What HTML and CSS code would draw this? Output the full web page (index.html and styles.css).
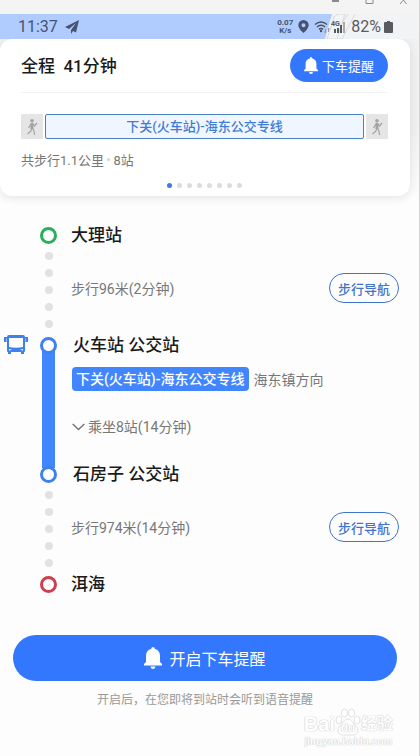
FILE: index.html
```html
<!DOCTYPE html>
<html lang="zh-CN">
<head>
  <meta charset="UTF-8" />
  <meta name="viewport" content="width=device-width, initial-scale=1.0"/>
  <title>公交路线</title>
  <link rel="stylesheet" href="styles.css">
</head>
<body>

  <!-- Window bar -->
  <div class="window-bar">
    <svg width="78" height="14" viewBox="0 0 78 14" fill="none" stroke="#8a8a8a">
      <path d="M1 1h7" stroke-width="2"/>
      <path d="M35 0v3.500h7V0"/>
      <path d="M69 4l3.500-4M75.500 4L72-.5"/>
    </svg>
  </div>

  <!-- Phone status bar -->
  <div class="status-bar">
    <svg class="status-shape" width="98" height="25" viewBox="0 0 98 25">
      <path d="M11 0H98V25H4L11 0z" fill="#f2f3f4"/>
      <path d="M13 3l4-3h7l-8 25H6zM27 0l-6 9 3 2M34 0L21 25h-5" fill="none" stroke="#d8dadc"/>
    </svg>
    <span class="clock">11:37</span>
    <svg width="14" height="14" viewBox="0 0 14 14" fill="#46536f">
      <path d="M14 0L0 7l4 2 7-6-5 7v4l2-3 3 1.500z"/>
    </svg>
    <div class="status-right">
      <span class="speed">0.07<br>K/s</span>
      <svg width="11" height="13" viewBox="0 0 11 13" fill="#46536f">
        <path fill-rule="evenodd" d="M5.500 0A5.200 5.200 0 0 0 .3 5.200C.3 8.500 5.500 13 5.500 13s5.200-4.500 5.200-7.800A5.200 5.200 0 0 0 5.500 0zm0 3.200a2 2 0 1 1 0 4 2 2 0 0 1 0-4z"/>
      </svg>
      <svg width="32" height="16" viewBox="0 0 32 16">
        <g fill="none" stroke="#4c4f56" stroke-width="1.500">
          <path d="M1 5.500q6-5 12 0M3 8q4-3.400 8 0M5 10.300q2-1.600 4 0"/>
        </g>
        <circle cx="7" cy="12" r="1.200" fill="#4c4f56"/>
        <path d="M11.500 10v4l-1.500-1.500M14.500 13V9l1.500 1.500" fill="none" stroke="#999"/>
        <text x="17" y="7" class="net-label">4G</text>
        <path d="M21 14v-4M24 14V9M27 14V6" stroke="#55585e" stroke-width="2"/>
        <path d="M30 14V3" stroke="#a9abae" stroke-width="2"/>
      </svg>
      <span class="battery">82%</span>
      <svg width="9" height="14" viewBox="0 0 9 14" fill="#5a5b5f">
        <path d="M3 1h3v1h2q1 0 1 1v9q0 1-1 1H1q-1 0-1-1V3q0-1 1-1h2z"/>
      </svg>
    </div>
  </div>

  <main>
    <!-- Trip summary -->
    <section class="summary-card">
      <div class="summary-head">
        <h1>全程&nbsp; 41分钟</h1>
        <button class="remind-btn">
          <svg width="14" height="17" viewBox="0 0 18 22" fill="#fff">
            <path d="M9 0a1.800 1.800 0 0 1 1.700 1.800C14 2.600 16 5.200 16 8.500V15l2 2v1.500H0V17l2-2V8.500C2 5.200 4 2.600 7.300 1.800A1.800 1.800 0 0 1 9 0zM6.500 19.500h5a2.500 2.500 0 0 1-5 0z"/>
          </svg>
          下车提醒
        </button>
      </div>
      <div class="segments">
        <span class="walk-seg">
          <svg width="12" height="16" viewBox="0 0 12 16" fill="none" stroke="#a2a2a4" stroke-width="1.200">
            <circle cx="6" cy="1.800" r="1.800" fill="#a2a2a4" stroke="none"/>
            <path d="M6 4v6" stroke-width="3"/>
            <path d="M5 5L2.500 9M7 5l1.500 2L11 4M5.500 9.500L5 12l-3.500 3M6.500 9.500L8 12l.5 4"/>
          </svg>
        </span>
        <span class="bus-seg">下关(火车站)-海东公交专线</span>
        <span class="walk-seg">
          <svg width="12" height="16" viewBox="0 0 12 16" fill="none" stroke="#a2a2a4" stroke-width="1.200">
            <circle cx="6" cy="1.800" r="1.800" fill="#a2a2a4" stroke="none"/>
            <path d="M6 4v6" stroke-width="3"/>
            <path d="M5 5L2.500 9M7 5l1.500 2L11 4M5.500 9.500L5 12l-3.500 3M6.500 9.500L8 12l.5 4"/>
          </svg>
        </span>
      </div>
      <p class="summary-info">共步行1.1公里 <i></i> 8站</p>
      <div class="pager">
        <span class="active"></span><span></span><span></span><span></span><span></span><span></span><span></span><span></span>
      </div>
    </section>

    <!-- Route timeline -->
    <ol class="route">
      <li class="station">
        <span class="ring start"></span>
        <h2>大理站</h2>
      </li>
      <li class="walk">
        <span class="dots"><i></i><i></i><i></i><i></i><i></i></span>
        <p>步行96米(2分钟)</p>
        <button class="nav-btn">步行导航</button>
      </li>
      <li class="station stop">
        <svg width="24" height="20" viewBox="0 0 24 20" fill="#3f7fee">
          <path fill-rule="evenodd" d="M5 0h14q2 0 2 2v14q0 1-1 1v2h-3v-2H7v2H4v-2q-1 0-1-1V2q0-2 2-2zm0 3v9q7 1.500 14 0V3zM5 14v1.500q2 0 3-.8zm14 0v1.500q-2 0-3-.8z"/>
          <path d="M0 2h4v1.500H2.500V7H0zM24 2h-4v1.500h1.500V7H24z"/>
        </svg>
        <span class="ring"></span>
        <h2>火车站 公交站</h2>
      </li>
      <li class="ride">
        <span class="bar"></span>
        <div class="ride-info">
          <div class="line-row">
            <span class="line-name">下关(火车站)-海东公交专线</span>
            <span>海东镇方向</span>
          </div>
          <button class="stops-btn">
            <svg width="13" height="8" viewBox="0 0 13 8" fill="none" stroke="#777" stroke-width="1.500">
              <path d="M.7 1l5.800 5.500L12.300 1"/>
            </svg>
            乘坐8站(14分钟)
          </button>
        </div>
      </li>
      <li class="station stop">
        <span class="ring"></span>
        <h2>石房子 公交站</h2>
      </li>
      <li class="walk">
        <span class="dots"><i></i><i></i><i></i><i></i><i></i></span>
        <p>步行974米(14分钟)</p>
        <button class="nav-btn">步行导航</button>
      </li>
      <li class="station">
        <span class="ring end"></span>
        <h2>洱海</h2>
      </li>
    </ol>

    <!-- Bottom action -->
    <footer>
      <button class="open-btn">
        <svg width="18" height="22" viewBox="0 0 18 22" fill="#fff">
          <path d="M9 0a1.800 1.800 0 0 1 1.700 1.800C14 2.600 16 5.200 16 8.500V15l2 2v1.500H0V17l2-2V8.500C2 5.200 4 2.600 7.300 1.800A1.800 1.800 0 0 1 9 0zM6.500 19.500h5a2.500 2.500 0 0 1-5 0z"/>
        </svg>
        开启下车提醒
      </button>
      <p>开启后，在您即将到站时会听到语音提醒</p>
    </footer>
  </main>

  <div class="watermark">
    <div class="mark-logo">
      <span>Bai</span>
      <span class="paw">
        <svg width="26" height="28" viewBox="0 0 26 28" fill="#fff" stroke="#e2e2e2">
          <ellipse cx="4" cy="12" rx="3" ry="4"/>
          <ellipse cx="9.500" cy="5" rx="3" ry="4"/>
          <ellipse cx="16.500" cy="5" rx="3" ry="4"/>
          <ellipse cx="22" cy="12" rx="3" ry="4"/>
          <path d="M13 11c-4 0-5 5-8 7s-3 9 3 9h10c6 0 6-7 3-9s-4-7-8-7z"/>
        </svg>
        <b>du</b>
      </span>
      <span>经验</span>
    </div>
    <div class="mark-url">jingyan.baidu.com</div>
  </div>

</body>
</html>
```

FILE: styles.css
```css
* {
  box-sizing: border-box;
}

body {
  margin: 0;
  min-height: 100vh;
  position: relative;
  font-family: Roboto, "Noto Sans CJK SC", sans-serif;
  font-size: 14px;
  color: #777;
  background: #fdfdfd;
  border-right: 1px solid #d4d4d4;
}

h1, h2, p, ol {
  margin: 0;
  padding: 0;
}

button {
  font-family: inherit;
  padding: 0;
  border: none;
  background: none;
  cursor: pointer;
}

svg {
  display: block;
  flex-shrink: 0;
}

/* top bars */
.window-bar {
  height: 14px;
  padding-right: 10px;
  display: flex;
  justify-content: flex-end;
  background: #f4f4f4;
}

.status-bar {
  position: relative;
  height: 25px;
  padding: 0 26px 0 18px;
  display: flex;
  align-items: center;
  gap: 7px;
  background: #b0ccff;
  color: #46536f;
}

.status-shape {
  position: absolute;
  top: 0;
  right: 0;
}

.clock {
  font-size: 16px;
}

.status-right {
  position: relative;
  margin-left: auto;
  display: flex;
  align-items: center;
  gap: 5px;
}

.speed {
  font-size: 8px;
  line-height: 8px;
  font-weight: 700;
  text-align: center;
}

.net-label {
  font-size: 7px;
  font-weight: 700;
  fill: #55585e;
}

.battery {
  font-size: 16px;
  color: #5a5b5f;
}

.battery + svg {
  margin-left: -2px;
}

/* summary card */
main {
  padding-right: 9px;
  background: linear-gradient(#f0f1f3, #f0f1f3 90px, #fdfdfd 160px);
}

.summary-card {
  padding: 10px 22px 8px 21px;
  background: #fff;
  border-radius: 12px;
  box-shadow: 0 2px 10px rgba(0, 0, 0, 0.1);
}

.summary-head {
  display: flex;
  align-items: center;
  justify-content: space-between;
  padding-bottom: 10px;
  border-bottom: 1px solid #f3f3f3;
}

h1, h2 {
  font-size: 17px;
  line-height: 24px;
  font-weight: 500;
  color: #1a1a1a;
}

.remind-btn {
  width: 98px;
  height: 33px;
  display: flex;
  align-items: center;
  justify-content: center;
  gap: 4px;
  border-radius: 17px;
  background: #3377ff;
  color: #fff;
  font-size: 13px;
}

.segments {
  display: flex;
  gap: 2px;
  margin-top: 21px;
}

.walk-seg {
  width: 22px;
  display: flex;
  align-items: center;
  justify-content: center;
  border-radius: 1px;
  background: #e5e5e5;
}

.bus-seg {
  flex: 1;
  height: 25px;
  line-height: 23px;
  text-align: center;
  border: 1px solid #4a80c4;
  border-radius: 2px;
  background: #f0f6ff;
  color: #3f7bd8;
  font-size: 13px;
  font-weight: 500;
}

.summary-info {
  margin-top: 12px;
  font-size: 13px;
  line-height: 20px;
}

.summary-info i {
  display: inline-block;
  width: 3px;
  height: 3px;
  margin-bottom: 4px;
  border-radius: 50%;
  background: #d4d4d4;
}

.pager {
  display: flex;
  justify-content: center;
  gap: 5px;
  margin-top: 12px;
}

.pager span {
  width: 5px;
  height: 5px;
  border-radius: 50%;
  background: #dcdcdc;
}

.pager .active {
  background: #3f7bd8;
}

/* route */
.route {
  list-style: none;
  padding: 27px 11px 0 4px;
}

.route li {
  display: grid;
  grid-template-columns: 24px 17px 1fr auto;
  align-items: center;
  column-gap: 12px;
}

.station {
  height: 24px;
}

.ring {
  grid-column: 2;
  width: 17px;
  height: 17px;
  border: 3px solid #3f7fee;
  border-radius: 50%;
  background: #fff;
  z-index: 1;
}

.ring.start {
  border-color: #28ae5c;
}

.ring.end {
  border-color: #d03c50;
}

.station h2,
.walk p {
  padding-left: 2px;
}

.station.stop h2 {
  padding-left: 4px;
}

.walk {
  height: 86px;
}

.walk p,
.nav-btn {
  margin-bottom: 4px;
}

.dots {
  grid-column: 2;
  display: flex;
  flex-direction: column;
  align-items: center;
  gap: 9px;
}

.dots i {
  width: 8px;
  height: 8px;
  border-radius: 50%;
  background: #e2e2e2;
}

.nav-btn {
  width: 70px;
  height: 30px;
  border: 1px solid #3f74cc;
  border-radius: 15px;
  color: #3f74cc;
  font-size: 13px;
  font-weight: 500;
}

.ride {
  height: 105px;
}

.bar {
  grid-column: 2;
  justify-self: center;
  width: 13px;
  height: 117px;
  margin: -6px 0;
  background: #4286ff;
}

.ride-info {
  align-self: start;
  padding: 10px 0 0 3px;
}

.line-row {
  display: flex;
  align-items: center;
  gap: 5px;
}

.line-name {
  height: 24px;
  line-height: 24px;
  padding: 0 4px;
  border-radius: 4px;
  background: #4286ff;
  color: #fff;
  font-weight: 500;
}

.stops-btn {
  display: flex;
  align-items: center;
  gap: 3px;
  margin-top: 26px;
  font-size: 14px;
  line-height: 20px;
  color: #777;
}

/* bottom action */
footer {
  padding: 39px 13px 0;
  text-align: center;
}

.open-btn {
  width: 100%;
  height: 46px;
  display: flex;
  align-items: center;
  justify-content: center;
  gap: 7px;
  border-radius: 23px;
  background: #3377ff;
  color: #fff;
  font-size: 16px;
}

footer p {
  margin-top: 10px;
  font-size: 12px;
  line-height: 18px;
  color: #999;
}

/* watermark over the page corner */
.watermark {
  position: absolute;
  right: 26px;
  bottom: 8px;
  font-family: "Liberation Sans", "Noto Sans CJK SC", sans-serif;
  font-weight: 700;
  color: #fff;
  text-shadow: 0 0 1px #c4c4c4, 0 0 1px #c4c4c4;
}

.mark-logo {
  display: flex;
  align-items: flex-end;
  font-size: 20px;
  line-height: 24px;
}

.mark-logo span:last-child {
  font-size: 16px;
}

.paw {
  display: grid;
  place-items: end center;
}

.paw svg,
.paw b {
  grid-area: 1 / 1;
}

.paw b {
  font-size: 12px;
  line-height: 16px;
}

.mark-url {
  font-size: 10px;
  line-height: 12px;
  text-align: center;
}
```
